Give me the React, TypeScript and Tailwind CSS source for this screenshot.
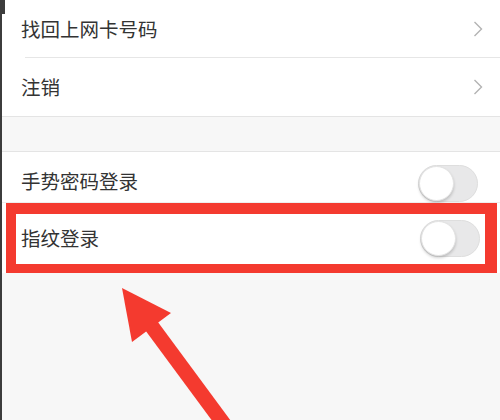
import React from "react";

const font = { fontFamily: '"Noto Sans CJK SC", "Noto Sans", sans-serif' };

function Chevron() {
  return (
    <svg width="10" height="16" viewBox="0 0 10 16" className="shrink-0">
      <polyline points="1.5,1 8.5,8 1.5,15" fill="none" stroke="#b3b3b3" strokeWidth="1.4" />
    </svg>
  );
}

function Toggle() {
  return (
    <div className="relative w-[60px] h-[37px] rounded-full bg-[#e8e8e9] border border-[#dedede] shrink-0">
      <div className="absolute left-0 top-[0px] w-[35px] h-[35px] rounded-full bg-white border border-[#e3e3e3] shadow-[0_2px_3px_rgba(0,0,0,0.18)]" />
    </div>
  );
}

export default function App() {
  return (
    <div className="relative w-[500px] h-[420px] overflow-hidden bg-[#f7f7f7]" style={font}>
      <div className="absolute left-0 top-0 bottom-0 w-[2px] bg-[#3c3c3c]" />
      <div className="absolute left-0 top-0 w-[5px] h-[14px] bg-[#3c3c3c]" />
      <div className="ml-[2px]">
        <div className="bg-white border-b border-[#e4e4e4]">
          <div className="h-[57px] flex items-center justify-between pl-[19px] pr-[17px]">
            <span className="text-[19.5px] text-[#333333]">找回上网卡号码</span>
            <Chevron />
          </div>
          <div className="ml-[23px] h-px bg-[#e6e6e6]" />
          <div className="h-[58px] flex items-center justify-between pl-[19px] pr-[17px]">
            <span className="text-[19.5px] text-[#333333]">注销</span>
            <Chevron />
          </div>
        </div>
        <div className="h-[34px]" />
        <div className="bg-white border-t border-[#e4e4e4]">
          <div className="h-[51px] flex items-center justify-between pl-[19px] pr-[22px] border-b border-[#eeeeee]">
            <span className="text-[19.5px] text-[#333333] mt-[8px]">手势密码登录</span>
            <div className="mt-[12px]">
              <Toggle />
            </div>
          </div>
          <div className="relative h-[70px] flex items-center justify-between pl-[19px] pr-[20px]">
            <span className="text-[19.5px] text-[#333333]">指纹登录</span>
            <Toggle />
            <div className="absolute left-[4px] top-0 w-[491px] h-[70px] border-[#f43a2f] border-l-[10px] border-t-[11px] border-r-[12px] border-b-[9px]" />
          </div>
        </div>
      </div>
      <svg className="absolute left-0 top-0" width="500" height="420" viewBox="0 0 500 420">
        <line x1="150" y1="324" x2="229" y2="431" stroke="#f43a2f" strokeWidth="15" />
        <polygon points="122,288 171,313 132,342" fill="#f43a2f" />
      </svg>
    </div>
  );
}
